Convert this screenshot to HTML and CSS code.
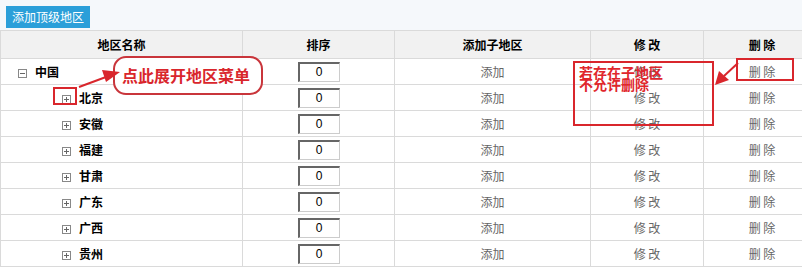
FILE: index.html
```html
<!DOCTYPE html>
<html>
<head>
  <title>地区管理</title>
  <link rel="stylesheet" href="styles.css">
</head>
<body>
  <div class="toolbar">
    <a href="#" class="btn-add">添加顶级地区</a>
  </div>

  <div class="area-wrap">
    <table class="area-table">
      <colgroup>
        <col class="col-name">
        <col class="col-sort">
        <col class="col-child">
        <col class="col-edit">
        <col class="col-del">
      </colgroup>
      <thead>
        <tr>
          <th>地区名称</th>
          <th>排序</th>
          <th>添加子地区</th>
          <th>修 改</th>
          <th>删 除</th>
        </tr>
      </thead>
      <tbody>
        <tr>
          <td class="name level-0"><span class="toggle minus"></span>中国</td>
          <td class="center"><input type="text" class="sort-input" value="0"></td>
          <td class="center"><a href="#">添加</a></td>
          <td class="center"><a href="#">修 改</a></td>
          <td class="center"><a href="#">删 除</a></td>
        </tr>
        <tr>
          <td class="name level-1"><span class="toggle plus"></span>北京</td>
          <td class="center"><input type="text" class="sort-input" value="0"></td>
          <td class="center"><a href="#">添加</a></td>
          <td class="center"><a href="#">修 改</a></td>
          <td class="center"><a href="#">删 除</a></td>
        </tr>
        <tr>
          <td class="name level-1"><span class="toggle plus"></span>安徽</td>
          <td class="center"><input type="text" class="sort-input" value="0"></td>
          <td class="center"><a href="#">添加</a></td>
          <td class="center"><a href="#">修 改</a></td>
          <td class="center"><a href="#">删 除</a></td>
        </tr>
        <tr>
          <td class="name level-1"><span class="toggle plus"></span>福建</td>
          <td class="center"><input type="text" class="sort-input" value="0"></td>
          <td class="center"><a href="#">添加</a></td>
          <td class="center"><a href="#">修 改</a></td>
          <td class="center"><a href="#">删 除</a></td>
        </tr>
        <tr>
          <td class="name level-1"><span class="toggle plus"></span>甘肃</td>
          <td class="center"><input type="text" class="sort-input" value="0"></td>
          <td class="center"><a href="#">添加</a></td>
          <td class="center"><a href="#">修 改</a></td>
          <td class="center"><a href="#">删 除</a></td>
        </tr>
        <tr>
          <td class="name level-1"><span class="toggle plus"></span>广东</td>
          <td class="center"><input type="text" class="sort-input" value="0"></td>
          <td class="center"><a href="#">添加</a></td>
          <td class="center"><a href="#">修 改</a></td>
          <td class="center"><a href="#">删 除</a></td>
        </tr>
        <tr>
          <td class="name level-1"><span class="toggle plus"></span>广西</td>
          <td class="center"><input type="text" class="sort-input" value="0"></td>
          <td class="center"><a href="#">添加</a></td>
          <td class="center"><a href="#">修 改</a></td>
          <td class="center"><a href="#">删 除</a></td>
        </tr>
        <tr>
          <td class="name level-1"><span class="toggle plus"></span>贵州</td>
          <td class="center"><input type="text" class="sort-input" value="0"></td>
          <td class="center"><a href="#">添加</a></td>
          <td class="center"><a href="#">修 改</a></td>
          <td class="center"><a href="#">删 除</a></td>
        </tr>
      </tbody>
    </table>

    <!-- annotations drawn over the table -->
    <div class="note-box note-toggle"></div>
    <div class="note-bubble">点此展开地区菜单</div>
    <div class="note-box note-child">若存在子地区<br>不允许删除</div>
    <div class="note-box note-del"></div>
    <svg class="note-arrows" width="802" height="238" viewBox="0 30 802 238">
      <line x1="79" y1="87" x2="106" y2="77" stroke="#d9262c" stroke-width="2"/>
      <polygon points="120,72 102,70 106,82" fill="#d9262c"/>
      <line x1="738" y1="63" x2="724" y2="76" stroke="#d9262c" stroke-width="2"/>
      <polygon points="715,85 719,71 729,80" fill="#d9262c"/>
    </svg>
  </div>
</body>
</html>
```

FILE: styles.css
```css
body {
  margin: 0;
  padding: 0;
  background-color: #fff;
  font-family: "Noto Sans CJK SC", "Liberation Sans", sans-serif;
  font-size: 12px;
  color: #333;
  overflow: hidden;
}

.toolbar {
  height: 30px;
  background-color: #f5f8fb;
  padding: 6px 0 0 6px;
  box-sizing: border-box;
}

.btn-add {
  display: inline-block;
  height: 22px;
  line-height: 22px;
  padding: 0 6px;
  background-color: #2b9fd9;
  color: white;
  font-size: 12px;
  text-decoration: none;
}

.area-wrap {
  position: relative;
  width: 820px;
}

.area-table {
  width: 820px;
  border-collapse: collapse;
  table-layout: fixed;
}

.col-name { width: 242px; }
.col-sort { width: 152px; }
.col-child { width: 196px; }
.col-edit { width: 113px; }
.col-del { width: 117px; }

.area-table th,
.area-table td {
  border: 1px solid #dadada;
  padding: 0;
}

.area-table th {
  height: 27px;
  background-color: #f1f1f1;
  font-weight: bold;
  color: #000;
  text-align: center;
}

.area-table td {
  height: 25px;
}

.area-table td.center {
  text-align: center;
}

.area-table a {
  color: #666;
  text-decoration: none;
}

.name {
  font-weight: bold;
  color: #000;
}

.level-0 { padding-left: 17px !important; }
.level-1 { padding-left: 61px !important; }

.toggle {
  display: inline-block;
  position: relative;
  width: 7px;
  height: 7px;
  border: 1px solid #888;
  margin-right: 8px;
  vertical-align: -1px;
}

.toggle::before {
  content: "";
  position: absolute;
  left: 1px;
  top: 3px;
  width: 5px;
  height: 1px;
  background-color: #666;
}

.toggle.plus::after {
  content: "";
  position: absolute;
  left: 3px;
  top: 1px;
  width: 1px;
  height: 5px;
  background-color: #666;
}

.sort-input {
  width: 42px;
  height: 20px;
  box-sizing: border-box;
  border-top: 2px solid #666;
  border-left: 2px solid #666;
  border-bottom: 1px solid #ccc;
  border-right: 1px solid #ccc;
  padding: 0;
  text-align: center;
  font-family: "Liberation Sans", Arial, sans-serif;
  font-size: 12px;
  color: #000;
  vertical-align: middle;
}

.note-box {
  position: absolute;
  border: 2px solid #d9262c;
  box-sizing: border-box;
}

.note-toggle {
  left: 53px;
  top: 57px;
  width: 24px;
  height: 18px;
}

.note-bubble {
  position: absolute;
  left: 113px;
  top: 26px;
  width: 150px;
  height: 39px;
  box-sizing: border-box;
  border: 2px solid #c9353b;
  border-radius: 13px;
  background-color: #fff;
  padding-left: 7px;
  line-height: 34px;
  font-size: 16px;
  font-weight: bold;
  color: #d9262c;
}

.note-child {
  left: 573px;
  top: 31px;
  width: 141px;
  height: 65px;
  padding: 3px 0 0 4px;
  font-size: 14px;
  line-height: 12px;
  font-weight: bold;
  color: #e0262c;
}

.note-del {
  left: 736px;
  top: 28px;
  width: 58px;
  height: 23px;
}

.note-arrows {
  position: absolute;
  left: 0;
  top: 0;
}
```
